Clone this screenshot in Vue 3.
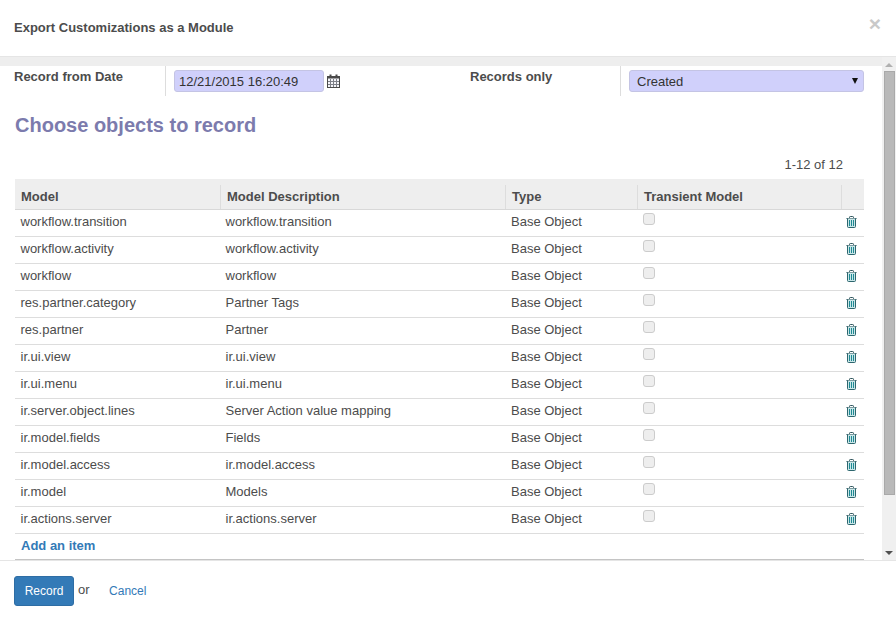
<script setup>
const rows = [
  ['workflow.transition', 'workflow.transition'],
  ['workflow.activity', 'workflow.activity'],
  ['workflow', 'workflow'],
  ['res.partner.category', 'Partner Tags'],
  ['res.partner', 'Partner'],
  ['ir.ui.view', 'ir.ui.view'],
  ['ir.ui.menu', 'ir.ui.menu'],
  ['ir.server.object.lines', 'Server Action value mapping'],
  ['ir.model.fields', 'Fields'],
  ['ir.model.access', 'ir.model.access'],
  ['ir.model', 'Models'],
  ['ir.actions.server', 'ir.actions.server'],
]
</script>

<template>
  <div class="modal">
    <header class="head">
      <h4 class="title">Export Customizations as a Module</h4>
      <span class="close">×</span>
    </header>
    <div class="middle">
      <div class="content">
        <div class="band"></div>
        <div class="form">
          <div class="f-label">Record from Date</div>
          <div class="f-val">
            <div class="input date">12/21/2015 16:20:49</div>
            <svg class="cal" width="13" height="14" viewBox="0 0 13 14">
              <rect x="0.5" y="2.5" width="12" height="11" fill="#f4f4f8" stroke="#4a4a4a" />
              <rect x="0.5" y="2" width="12" height="2.5" fill="#4a4a4a" />
              <rect x="2.5" y="0.5" width="2" height="3" fill="#4a4a4a" />
              <rect x="8.5" y="0.5" width="2" height="3" fill="#4a4a4a" />
              <path d="M3.5 5v8M6.5 5v8M9.5 5v8M1 7.5h11M1 10.5h11" stroke="#7d8088" stroke-width="1" fill="none" />
            </svg>
          </div>
          <div class="f-label">Records only</div>
          <div class="f-val">
            <div class="input select">Created<span class="caret"></span></div>
          </div>
        </div>
        <h2 class="section">Choose objects to record</h2>
        <div class="pager">1-12 of 12</div>
        <table class="grid">
          <colgroup>
            <col class="c1" /><col class="c2" /><col class="c3" /><col class="c4" /><col class="c5" />
          </colgroup>
          <thead>
            <tr>
              <th>Model</th>
              <th>Model Description</th>
              <th>Type</th>
              <th>Transient Model</th>
              <th></th>
            </tr>
          </thead>
          <tbody>
            <tr v-for="r in rows" :key="r[0]">
              <td>{{ r[0] }}</td>
              <td>{{ r[1] }}</td>
              <td>Base Object</td>
              <td class="chk"><span class="box"></span></td>
              <td class="del">
                <svg width="11" height="12" viewBox="0 0 11 12">
                  <path d="M0.5 2.5h10M3.5 2.5v-1.2q0-.8.8-.8h2.4q.8 0 .8.8v1.2" fill="none" stroke="#2f555c" />
                  <path d="M1.5 2.5v8q0 1 1 1h6q1 0 1-1v-8" fill="#c9e6e8" stroke="#2d666e" />
                  <path d="M3.5 4v6M5.5 4v6M7.5 4v6" stroke="#1f8a94" fill="none" />
                </svg>
              </td>
            </tr>
            <tr class="add">
              <td colspan="5"><a>Add an item</a></td>
            </tr>
          </tbody>
        </table>
      </div>
      <div class="scrollbar">
        <span class="arrow up"></span>
        <div class="track"><div class="thumb"></div></div>
        <span class="arrow down"></span>
      </div>
    </div>
    <footer class="foot">
      <button class="btn">Record</button>
      <span class="or">or</span>
      <a class="cancel">Cancel</a>
    </footer>
  </div>
</template>

<style>
html, body { margin: 0; background: #fff; }
</style>

<style scoped>
.modal {
  width: 896px;
  height: 620px;
  display: flex;
  flex-direction: column;
  font-family: "Liberation Sans", Arial, sans-serif;
  font-size: 13px;
  color: #4c4c4c;
  background: #fff;
  overflow: hidden;
}
.head {
  height: 56px;
  flex: none;
  border-bottom: 1px solid #e5e5e5;
  display: flex;
  justify-content: space-between;
  padding: 0 14px;
}
.title {
  margin: 20px 0 0;
  font-size: 13px;
  line-height: 15px;
  font-weight: 700;
}
.close {
  font-size: 21px;
  font-weight: 700;
  line-height: 21px;
  color: #c9c9c9;
  margin: 13px 1px 0 0;
}
.middle {
  flex: none;
  height: 503px;
  display: flex;
  background: #fff;
}
.content {
  flex: 1;
  min-width: 0;
  padding-right: 18px;
}
.band {
  height: 9px;
  background: #eee;
  margin-right: -18px;
}
.form {
  margin-left: 14px;
  display: grid;
  grid-template-columns: 151px 305px 150px 244px;
  height: 30px;
}
.f-label {
  font-weight: 700;
  line-height: 15px;
  padding-top: 3px;
}
.f-val {
  border-left: 1px solid #ddd;
  display: flex;
  align-items: flex-start;
  padding-top: 4px;
  padding-left: 8px;
  gap: 3px;
}
.input {
  height: 22px;
  box-sizing: border-box;
  background: #d0d0fb;
  border: 1px solid #c4c4e4;
  border-radius: 3px;
  color: #333;
  line-height: 21px;
}
.date {
  width: 150px;
  padding-left: 4px;
}
.cal { margin-top: 4px; }
.select {
  flex: 1;
  position: relative;
  padding-left: 7px;
  line-height: 22px;
}
.caret {
  position: absolute;
  right: 5px;
  top: 7px;
  border-left: 3px solid transparent;
  border-right: 3px solid transparent;
  border-top: 6px solid #111;
}
.section {
  margin: 18px 0 0 15px;
  font-size: 20px;
  line-height: 22px;
  font-weight: 700;
  color: #7c7bad;
}
.pager {
  margin-top: 21px;
  height: 22px;
  line-height: 15px;
  text-align: right;
  padding-right: 21px;
}
.grid {
  margin-left: 15px;
  width: 849px;
  table-layout: fixed;
  border-collapse: separate;
  border-spacing: 0;
}
.c1 { width: 205px; }
.c2 { width: 285px; }
.c3 { width: 132px; }
.c4 { width: 204px; }
.c5 { width: 23px; }
th {
  height: 24px;
  background: #eee;
  border-bottom: 1px solid #d8d8d8;
  padding: 6px 0 0 7px;
  box-sizing: content-box;
  text-align: left;
  vertical-align: top;
  font-weight: 700;
  line-height: 23px;
  position: relative;
}
th:first-child { padding-left: 6px; }
th + th::before {
  content: "";
  position: absolute;
  left: 0;
  top: 6px;
  bottom: 0;
  width: 1px;
  background: #ddd;
}
td {
  height: 22px;
  padding: 4px 0 0 5.5px;
  border-bottom: 1px solid #ddd;
  line-height: 15px;
  box-sizing: content-box;
  white-space: nowrap;
  vertical-align: top;
}
td:nth-child(3) { padding-left: 6px; }
.chk { padding: 0 0 0 6px; height: 26px; }
.box {
  display: block;
  width: 12px;
  height: 12px;
  margin-top: 3px;
  box-sizing: border-box;
  background: #eee;
  border: 1px solid #ccc;
  border-radius: 3px;
}
.del { padding: 0; height: 26px; }
.del svg { display: block; margin: 6px 0 0 5px; }
.add td { border-bottom: 1px solid #c4c4c4; height: 21px; padding-left: 6px; }
.add a { color: #337ab7; font-weight: 700; }
.scrollbar {
  width: 14px;
  flex: none;
  background: #f0f0f0;
  display: flex;
  flex-direction: column;
  align-items: center;
  padding-top: 6px;
  box-sizing: border-box;
}
.arrow {
  display: block;
  flex: none;
  border-left: 4px solid transparent;
  border-right: 4px solid transparent;
}
.up { border-bottom: 4px solid #b0b0b0; }
.down { border-top: 4px solid #505050; margin-bottom: 5px; }
.track { flex: 1; width: 100%; padding: 4px 1px 0 2px; box-sizing: border-box; }
.thumb {
  height: 424px;
  background: #b9b9b9;
  border: 1px solid #a9a9a9;
  box-sizing: border-box;
}
.foot {
  flex: none;
  border-top: 1px solid #e5e5e5;
  padding: 15px 14px;
  display: flex;
  align-items: flex-start;
}
.btn {
  width: 60px;
  height: 30px;
  background: #337ab7;
  border: 1px solid #2e6da4;
  border-radius: 3px;
  color: #fff;
  font: 12px/16px "Liberation Sans", Arial, sans-serif;
  padding: 0;
}
.or { margin-left: 4px; margin-top: 6px; line-height: 15px; }
.cancel {
  margin-left: 19.5px;
  margin-top: 8px;
  font-size: 12px;
  line-height: 15px;
  color: #337ab7;
}
</style>
